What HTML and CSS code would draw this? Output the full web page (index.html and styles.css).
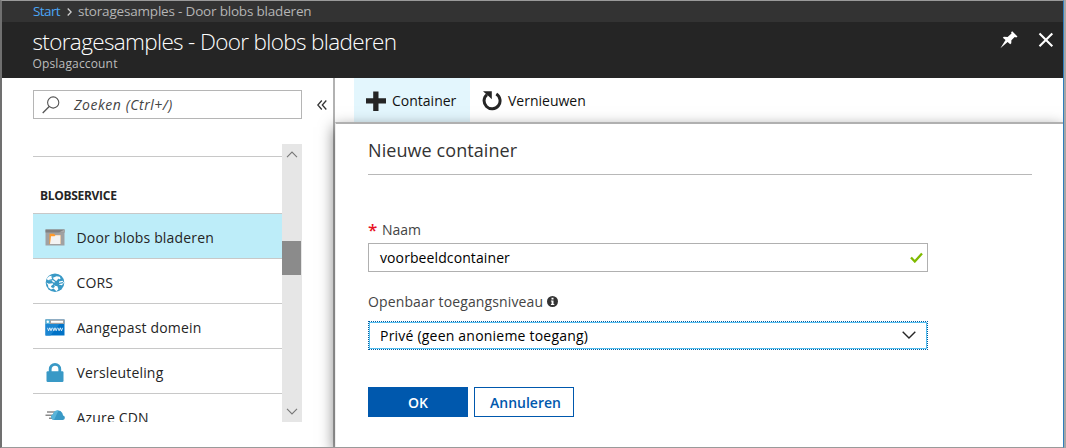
FILE: index.html
```html
<!DOCTYPE html>
<html lang="nl">
<head>
<meta charset="utf-8">
<title>storagesamples - Door blobs bladeren</title>
<link rel="stylesheet" href="styles.css">
</head>
<body>
<div class="window">
  <nav class="breadcrumb">
    <a class="crumb-link">Start</a>
    <svg class="crumb-sep" width="5" height="8" viewBox="0 0 5 8"><path d="M.7.5 4.2 4 .7 7.5" fill="none" stroke="#d0d0d0" stroke-width="1.3"/></svg>
    <span class="crumb-current">storagesamples - Door blobs bladeren</span>
  </nav>
  <header class="header">
    <div class="heading">
      <h1 class="title">storagesamples - Door blobs bladeren</h1>
      <div class="subtitle">Opslagaccount</div>
    </div>
    <div class="header-actions">
      <svg width="18" height="18" viewBox="0 0 18 18"><path d="M12.2.3 17.5 5.4 16.3 6.4 14.7 6.1 11.4 9.2 11.3 12.3 10.2 13.3 7.6 11 .4 17.3 5.5 9 2.8 6.8 3.9 5.8 7.6 6 11.500 2.600 11.100 1.300Z" fill="#fff"/></svg>
      <svg width="16" height="16" viewBox="0 0 16 16"><path d="M1.500 1.500 14.300 14.300M14.300 1.500 1.500 14.300" stroke="#fff" stroke-width="2.100" fill="none"/></svg>
    </div>
  </header>
  <div class="body">
    <aside class="sidebar">
      <div class="search-row">
        <div class="search">
          <svg width="18" height="18" viewBox="0 0 18 18"><circle cx="11.200" cy="6.500" r="5.600" fill="none" stroke="#555" stroke-width="1.100"/><path d="M7.200 10.500.700 17" stroke="#555" stroke-width="1.300"/></svg>
          <span class="search-hint">Zoeken (Ctrl+/)</span>
        </div>
        <svg class="collapse" width="10" height="10" viewBox="0 0 10 10"><path d="M4.800.500.800 5l4 4.500M9.300.500l-4 4.500 4 4.500" fill="none" stroke="#333" stroke-width="1.300"/></svg>
      </div>
      <div class="menu">
        <div class="menu-list">
          <div class="menu-section"><span>BLOBSERVICE</span></div>
          <div class="item item-active">
            <svg class="icon" width="20" height="20" viewBox="0 0 20 20"><path d="M.5 1.500h19v16H.5z" fill="#a0a1a2"/><path d="M.5 1.500h19v3H.5z" fill="#808080"/><path d="M14 4.500 19.500 1.500v3z" fill="#aaa"/><path d="M4.500 5.800h4.500l1 1.200h5.500v9h-11z" fill="#ff9a2a"/><path d="M6 8.200h3.500l1-1h5V16H5z" fill="#f3f3f3"/></svg>
            <span class="label">Door blobs bladeren</span>
          </div>
          <div class="item">
            <svg class="icon" width="20" height="20" viewBox="0 0 20 20"><circle cx="10" cy="9.700" r="9.300" fill="#3999c6"/><path d="M1.500 6 4 3.200l2.500-.4L8 4.800l3.500-1.600 3.300.6.800 2-3 1.200-2.200 2.600-2.500-.4-1.200-2-3 .4zM1.200 9.500l2.600 1.300 3.800-.6 2.200 2.600 2.600.4 1 3-2 2-2.800-2.600-2.600.8-2.600-1.800-.4-2.600zM14 8.500l3.500-.7 1.500 2-2.200 2.400-2.800-.6z" fill="#fff"/><path d="M3.500 7.500 8 6.500l5.500 4.200 4.500-1M6.500 14l3.500-3.500 4-4.500M6.800 3.300 8 6.500" fill="none" stroke="#3999c6" stroke-width="1.200"/><circle cx="8" cy="13.300" r="1.600" fill="#3999c6"/></svg>
            <span class="label">CORS</span>
          </div>
          <div class="item">
            <svg class="icon" width="20" height="20" viewBox="0 0 20 20"><path d="M.5 1.500h19v16H.5z" fill="#0072c6"/><path d="M.5 1.500h19v4.500H.5z" fill="#a0a1a2"/><path d="M6 2.800h12v2H6z" fill="#fff"/><path d="M.5 1.500h4.500V6H.5z" fill="#59b4d9"/><circle cx="2.800" cy="3.700" r="1.200" fill="#fff"/><path d="M.5 6h14l-9 11.500h-5z" fill="#1b86d2"/><path d="m2.500 9.800 1.100 3 1.200-3 1.200 3 1.100-3M7.700 9.800l1.100 3 1.200-3 1.200 3 1.100-3M13 9.800l1.100 3 1.200-3 1.200 3 1.100-3" fill="none" stroke="#fff" stroke-width=".8"/></svg>
            <span class="label">Aangepast domein</span>
          </div>
          <div class="item">
            <svg class="icon" width="20" height="20" viewBox="0 0 20 20"><path d="M5.200 9V6.200a4.800 4.800 0 0 1 9.600 0V9" fill="none" stroke="#3999c6" stroke-width="2.800"/><rect x="1.500" y="8.300" width="17" height="10.700" rx="1.200" fill="#3999c6"/></svg>
            <span class="label">Versleuteling</span>
          </div>
          <div class="item">
            <svg class="icon" width="20" height="20" viewBox="0 0 20 20"><path d="M2 4h10M.5 7.200h9M4 10.300h7" stroke="#8a8a8a" stroke-width="1.600"/><path d="M9 12a3 3 0 0 1-1-5.800A5.200 5.200 0 0 1 17.300 5l.8 2.500A2.300 2.300 0 0 1 18 12z" fill="#3999c6"/><path d="M9 12a3 3 0 0 1-1-5.800A5.200 5.200 0 0 1 13.500 2.400z" fill="#59b4d9"/></svg>
            <span class="label">Azure CDN</span>
          </div>
        </div>
        <div class="scrollbar">
          <svg width="12" height="7" viewBox="0 0 12 7"><path d="M1 6.200 6 1l5 5.200" fill="none" stroke="#777" stroke-width="1.100"/></svg>
          <div class="thumb"></div>
          <svg width="12" height="7" viewBox="0 0 12 7"><path d="M1 .8 6 6 11 .8" fill="none" stroke="#777" stroke-width="1.100"/></svg>
        </div>
      </div>
    </aside>
    <main class="main">
      <div class="toolbar">
        <div class="tool tool-active">
          <svg width="20" height="20" viewBox="0 0 20 20"><path d="M7.200.5h5.300v6.700H20v5.300h-7.500V20H7.200v-7.500H0V7.200h7.200z" fill="#252525"/></svg>
          <span>Container</span>
        </div>
        <div class="tool">
          <svg width="20" height="20" viewBox="0 0 20 20"><path d="M5 3.600A8 8 0 1 0 14.300 3" fill="none" stroke="#252525" stroke-width="3"/><path d="M1 .2h8.800v8L7 5.400z" fill="#252525"/></svg>
          <span>Vernieuwen</span>
        </div>
      </div>
      <section class="panel">
        <h2 class="panel-title"><span>Nieuwe container</span></h2>
        <div class="field-label"><span class="required">*</span><span class="name-label">Naam</span></div>
        <div class="input">
          <span class="name-value">voorbeeldcontainer</span>
          <svg width="13" height="11" viewBox="0 0 13 11"><path d="M1 5.500 4.800 9.500 12 1.500" fill="none" stroke="#7fba00" stroke-width="2.300"/></svg>
        </div>
        <div class="field-label access-row"><span class="access-label">Openbaar toegangsniveau</span>
          <svg width="11" height="11" viewBox="0 0 11 11"><circle cx="5.500" cy="5.500" r="5.500" fill="#333"/><path d="M4.500 1.800h2v1.600h-2zM3.900 4.500h2.600v3.600h.8v1H3.900v-1h.7V5.500h-.7z" fill="#fff"/></svg>
        </div>
        <div class="input select">
          <span class="access-value">Privé (geen anonieme toegang)</span>
          <svg width="14" height="8" viewBox="0 0 14 8"><path d="m.7.7 6.300 6.200L13.300.7" fill="none" stroke="#252525" stroke-width="1.400"/></svg>
        </div>
        <div class="buttons">
          <button class="button primary">OK</button>
          <button class="button secondary">Annuleren</button>
        </div>
      </section>
    </main>
  </div>
</div>
</body>
</html>
```
FILE: styles.css
```css
* { box-sizing: border-box; }
body { margin: 0; background: #a6a6a6; font-family: "Open Sans", "Noto Sans", sans-serif; font-size: 14px; color: #252525; }
svg { display: block; flex: none; }
span, a, h1, .subtitle { white-space: nowrap; }
.window { width: 1064px; height: 448px; border: solid; border-width: 1px 1px 1px 2px; border-color: #9a9a9a #2e7ebd #9a9a9a #707070; display: flex; flex-direction: column; background: #fff; overflow: hidden; }

.breadcrumb { height: 21px; flex: none; background: #333; display: flex; align-items: center; padding: 0 0 0 31px; font-size: 13.5px; line-height: 19px; }
.crumb-link { color: #4ba6f5; width: 28px; letter-spacing: -.6px; }
.crumb-sep { margin: 0 6px; }
.crumb-current { color: #b5b5b5; letter-spacing: -.19px; }
.header { height: 56px; flex: none; background: #252525; color: #fff; display: flex; justify-content: space-between; padding: 4px 9px 0 30.5px; }
.title { margin: 0; font-size: 22.5px; line-height: 32px; font-weight: 300; letter-spacing: -.65px; }
.subtitle { font-size: 12px; line-height: 14px; margin-top: -1px; color: #bdbdbd; letter-spacing: .16px; }
.header-actions { display: flex; gap: 20px; padding-top: 5px; }
.header-actions svg:last-child { margin-top: 1px; }

.body { flex: 1; display: flex; min-height: 0; overflow: hidden; }
.sidebar { width: 331px; flex: none; padding: 12px 0 0 31px; }
.search-row { display: flex; align-items: center; gap: 15px; }
.search { width: 269px; height: 29px; border: 1px solid #b5b5b5; display: flex; align-items: center; padding-left: 8px; gap: 14px; }
.search-hint { font-style: italic; color: #444; letter-spacing: .55px; }
.menu { width: 269px; height: 278px; margin-top: 25px; display: flex; overflow: hidden; }
.menu-list { flex: 1; padding-top: 12px; }
.menu-section { height: 57px; border-top: 1px solid #c8c8c8; padding: 31px 0 0 7px; font-size: 12px; line-height: 16px; font-weight: 700; letter-spacing: -.3px; }
.item { height: 45px; border-top: 1px solid #c8c8c8; display: flex; align-items: center; padding: 3px 0 0 12px; gap: 11.500px; }
.item-active { background: #bdedf9; }
.label { letter-spacing: .17px; }
.scrollbar { width: 20px; height: 278px; background: #e6e6e6; display: flex; flex-direction: column; align-items: center; padding: 7px 0 6px; }
.thumb { width: 19px; height: 34px; margin: 83px 1px 133px 0; background: #8b8b8b; flex: none; }

.main { flex: 1; border-left: 2px solid #b2b2b2; display: flex; flex-direction: column; min-width: 0; }
.toolbar { height: 44px; flex: none; padding-left: 19px; display: flex; }
.tool { display: flex; align-items: center; padding: 1px 12px 0; gap: 6px; width: 130px; color: #111; }
.tool-active { background: #e3f6fd; width: 116px; }
.panel { flex: 1; border-top: 2px solid #b0b0b0; border-left: 1px solid #eee; padding: 0 0 0 32px; background: #fff; box-shadow: -1px 5px 14px rgba(0, 0, 0, .5); }
.panel-title { width: 664px; height: 51px; margin: 0 0 46px; border-bottom: 1px solid #b8b8b8; padding-top: 13px; font-size: 18px; line-height: 26px; font-weight: 400; letter-spacing: .08px; color: #333; }
.field-label { height: 22px; display: flex; line-height: 17px; color: #444; }
.required { color: #e81123; font-weight: 600; font-size: 17px; width: 14px; }
.input { width: 560px; height: 29px; border: 1px solid #b0b0b0; display: flex; align-items: center; justify-content: space-between; padding: 0 4px 0 11px; color: #000; }
.name-value { letter-spacing: .1px; }
.access-row { margin-top: 21px; height: 28px; align-items: flex-start; gap: 4px; }
.access-label { letter-spacing: .13px; }
.access-row svg { margin-top: 3px; }
.select { border: 1px dotted #005a9e; outline: 1px solid #55bff0; outline-offset: -2px; padding: 0 11px 1px; }
.access-value { letter-spacing: .21px; }
.buttons { display: flex; gap: 6px; margin-top: 37px; }
.button { width: 100px; height: 30px; border: 1px solid #0058ad; background: #fff; color: #0058ad; font: 600 14px "Open Sans", sans-serif; padding: 0; }
.primary { background: #0058ad; color: #fff; }
.secondary { padding-left: 3px; }
```
